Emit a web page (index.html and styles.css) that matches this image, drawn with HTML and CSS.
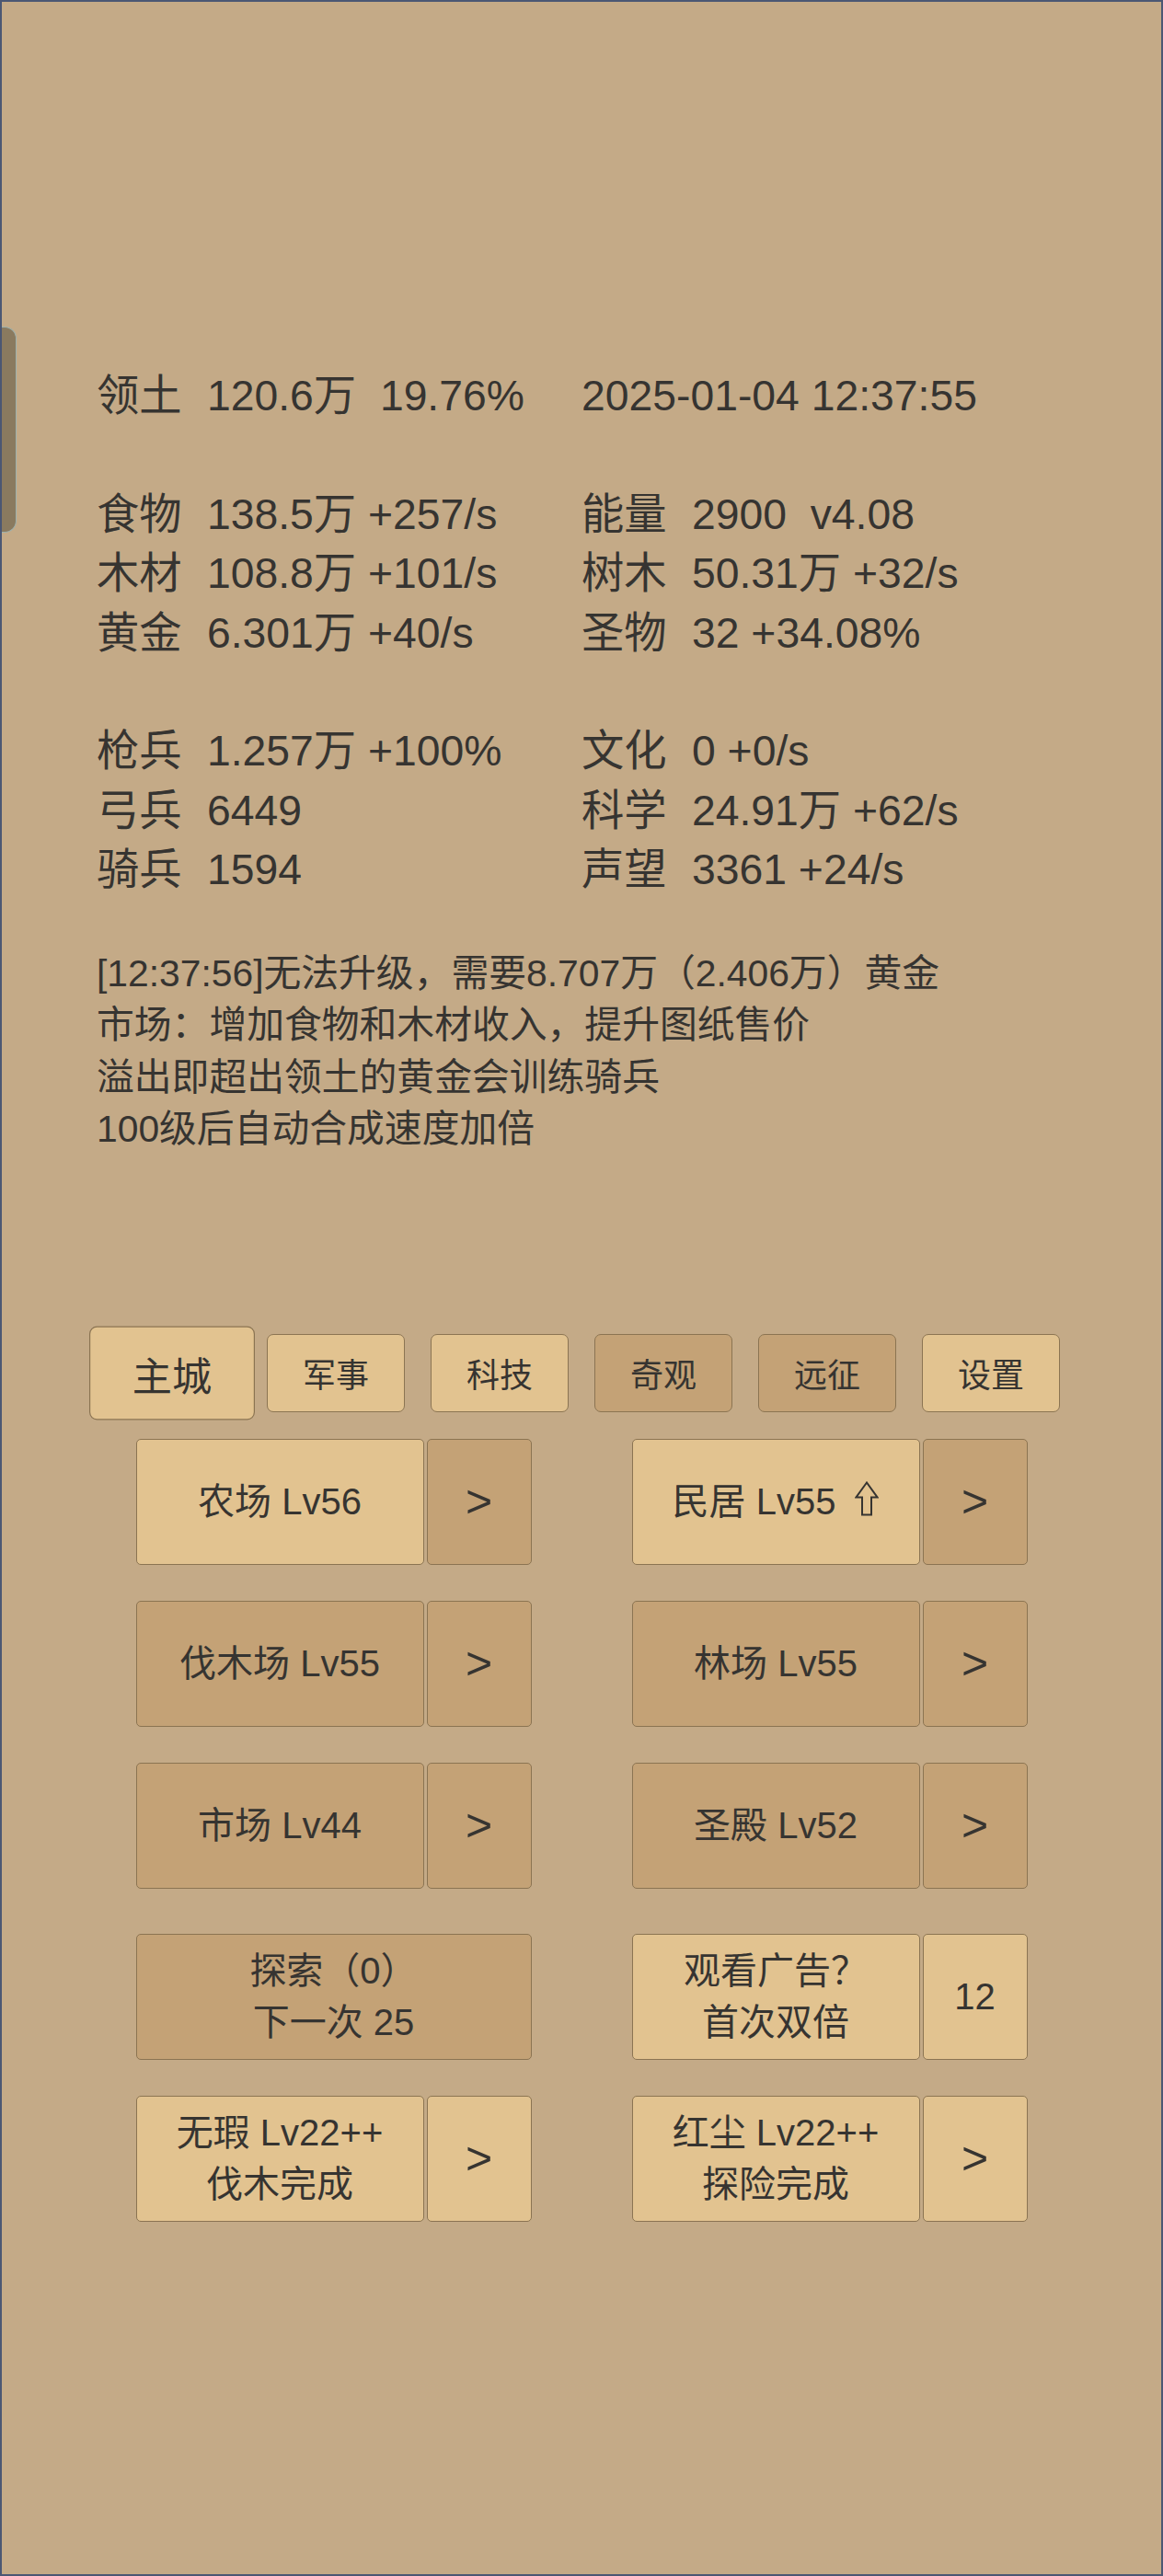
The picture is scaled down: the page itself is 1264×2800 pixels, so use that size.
FILE: index.html
```html
<!DOCTYPE html>
<html lang="zh">
<head>
<meta charset="utf-8">
<title>领土</title>
<link rel="stylesheet" href="styles.css">
</head>
<body>
<div class="app">
  <div class="handle"></div>

  <section class="stats">
    <div class="col col-left">
      <div class="line"><span class="lbl">领土</span><span class="val">120.6万  19.76%</span></div>
      <div class="line"></div>
      <div class="line"><span class="lbl">食物</span><span class="val">138.5万 +257/s</span></div>
      <div class="line"><span class="lbl">木材</span><span class="val">108.8万 +101/s</span></div>
      <div class="line"><span class="lbl">黄金</span><span class="val">6.301万 +40/s</span></div>
      <div class="line"></div>
      <div class="line"><span class="lbl">枪兵</span><span class="val">1.257万 +100%</span></div>
      <div class="line"><span class="lbl">弓兵</span><span class="val">6449</span></div>
      <div class="line"><span class="lbl">骑兵</span><span class="val">1594</span></div>
    </div>
    <div class="col col-right">
      <div class="line"><span class="val">2025-01-04 12:37:55</span></div>
      <div class="line"></div>
      <div class="line"><span class="lbl">能量</span><span class="val">2900  v4.08</span></div>
      <div class="line"><span class="lbl">树木</span><span class="val">50.31万 +32/s</span></div>
      <div class="line"><span class="lbl">圣物</span><span class="val">32 +34.08%</span></div>
      <div class="line"></div>
      <div class="line"><span class="lbl">文化</span><span class="val">0 +0/s</span></div>
      <div class="line"><span class="lbl">科学</span><span class="val">24.91万 +62/s</span></div>
      <div class="line"><span class="lbl">声望</span><span class="val">3361 +24/s</span></div>
    </div>
  </section>

  <section class="log">
    <p>[12:37:56]无法升级，需要8.707万（2.406万）黄金</p>
    <p>市场：增加食物和木材收入，提升图纸售价</p>
    <p>溢出即超出领土的黄金会训练骑兵</p>
    <p>100级后自动合成速度加倍</p>
  </section>

  <nav class="tabs">
    <div class="tab light active">主城</div>
    <div class="tab light">军事</div>
    <div class="tab light">科技</div>
    <div class="tab dark">奇观</div>
    <div class="tab dark">远征</div>
    <div class="tab light">设置</div>
  </nav>

  <section class="grid">
    <div class="row">
      <div class="group">
        <div class="btn main light">农场 Lv56</div>
        <div class="btn arrow dark">&gt;</div>
      </div>
      <div class="group">
        <div class="btn main light">民居 Lv55<svg class="up" width="26" height="38" viewBox="0 0 26 38" aria-hidden="true"><path d="M13 1.5 L1.5 17.5 H8 V36.5 H18 V17.5 H24.5 Z" fill="none" stroke="#363431" stroke-width="2" stroke-linejoin="miter"/></svg></div>
        <div class="btn arrow dark">&gt;</div>
      </div>
    </div>
    <div class="row">
      <div class="group">
        <div class="btn main dark">伐木场 Lv55</div>
        <div class="btn arrow dark">&gt;</div>
      </div>
      <div class="group">
        <div class="btn main dark">林场 Lv55</div>
        <div class="btn arrow dark">&gt;</div>
      </div>
    </div>
    <div class="row">
      <div class="group">
        <div class="btn main dark">市场 Lv44</div>
        <div class="btn arrow dark">&gt;</div>
      </div>
      <div class="group">
        <div class="btn main dark">圣殿 Lv52</div>
        <div class="btn arrow dark">&gt;</div>
      </div>
    </div>
    <div class="row row-extra">
      <div class="group">
        <div class="btn wide dark">探索（0）<br>下一次 25</div>
      </div>
      <div class="group">
        <div class="btn main light">观看广告？<br>首次双倍</div>
        <div class="btn arrow light num">12</div>
      </div>
    </div>
    <div class="row">
      <div class="group">
        <div class="btn main light">无瑕 Lv22++<br>伐木完成</div>
        <div class="btn arrow light">&gt;</div>
      </div>
      <div class="group">
        <div class="btn main light">红尘 Lv22++<br>探险完成</div>
        <div class="btn arrow light">&gt;</div>
      </div>
    </div>
  </section>
</div>
</body>
</html>
```

FILE: styles.css
```css
* {
  box-sizing: border-box;
}

html, body {
  margin: 0;
  padding: 0;
  background: #c4aa87;
}

body {
  font-family: "Liberation Sans", "Noto Sans CJK SC", sans-serif;
  color: #363431;
}

.app {
  position: relative;
  width: 1264px;
  height: 2800px;
  border: 2px solid #4b5773;
  background: #c4aa87;
  overflow: hidden;
}

.handle {
  position: absolute;
  left: 0;
  top: 353px;
  width: 16px;
  height: 224px;
  background: #8a7a5f;
  border: 1.5px solid #9db1ae;
  border-left: none;
  border-radius: 0 13px 13px 0;
}

/* ---------- stats ---------- */
.stats {
  display: flex;
  padding-top: 396px;
  padding-left: 103px;
  font-size: 46.3px;
}

.col-left {
  width: 527px;
}

.line {
  height: 64.4px;
  line-height: 64.4px;
  white-space: pre;
}

.lbl {
  display: inline-block;
  width: 120px;
}

/* ---------- log ---------- */
.log {
  margin-top: 52px;
  padding-left: 103px;
  font-size: 40.8px;
  line-height: 56.6px;
}

.log p {
  margin: 0;
  white-space: nowrap;
}

/* ---------- tabs ---------- */
.tabs {
  display: flex;
  justify-content: center;
  gap: 28px;
  margin-top: 194px;
}

.tab {
  width: 150px;
  height: 85px;
  display: flex;
  align-items: center;
  justify-content: center;
  font-size: 36px;
  border: 1.5px solid #8b7452;
  border-radius: 7px;
}

.tab.active {
  transform: scale(1.2);
}

.light {
  background: #e2c390;
}

.dark {
  background: #c4a276;
}

/* ---------- buttons ---------- */
.grid {
  display: flex;
  flex-direction: column;
  gap: 39px;
  margin-top: 29px;
}

.row {
  display: flex;
  justify-content: center;
  gap: 109px;
}

.row-extra {
  margin-top: 10px;
}

.group {
  display: flex;
  gap: 3px;
}

.btn {
  height: 137px;
  display: flex;
  align-items: center;
  justify-content: center;
  text-align: center;
  font-size: 40px;
  line-height: 56px;
  border: 1.5px solid #8b7452;
  border-radius: 5px;
}

.main {
  width: 313px;
}

.arrow {
  width: 114px;
  font-size: 50px;
}

.arrow.num {
  font-size: 40px;
}

.wide {
  width: 430px;
}

.up {
  display: block;
  margin-left: 21px;
  margin-top: -6px;
}
```
